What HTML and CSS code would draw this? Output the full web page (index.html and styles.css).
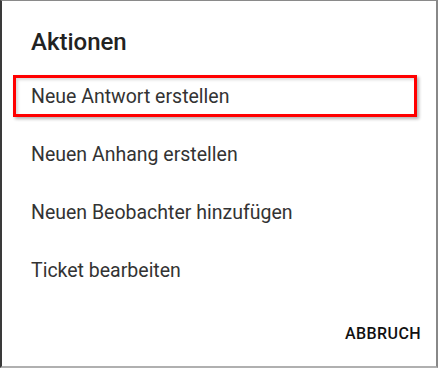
FILE: index.html
```html
<!DOCTYPE html>
<html lang="de">
<head>
  <meta charset="UTF-8" />
  <meta name="viewport" content="width=device-width, initial-scale=1.0"/>
  <title>Aktionen</title>
  <link rel="stylesheet" href="styles.css">
</head>
<body>
  <div class="dialog">
    <h2 class="title">Aktionen</h2>

    <ul class="action-list">
      <li class="action active">Neue Antwort erstellen</li>
      <li class="action">Neuen Anhang erstellen</li>
      <li class="action">Neuen Beobachter hinzufügen</li>
      <li class="action">Ticket bearbeiten</li>
    </ul>

    <div class="buttons">
      <button type="button" class="cancel">Abbruch</button>
    </div>
  </div>
</body>
</html>
```

FILE: styles.css
```css
* {
  margin: 0;
  padding: 0;
  box-sizing: border-box;
}

body, html {
  height: 100%;
  font-family: Roboto, 'Noto Sans', sans-serif;
  background-color: #fff;
}

.dialog {
  height: 368px;
  border-top: 1px solid #8a8a8a;
  border-left: 2px solid #3a3a3a;
  border-right: 2px solid #888;
  border-bottom: 2px solid #b0b0b0;
  background-color: #fff;
}

.title {
  padding: 25px 0 0 29px;
  font-size: 24px;
  line-height: 32px;
  font-weight: 500;
  color: #222;
}

.action-list {
  display: flex;
  flex-direction: column;
  list-style: none;
  margin-top: 9px;
}

.action {
  display: flex;
  align-items: center;
  height: 42px;
  margin: 8px 19px 8px 11px;
  padding-left: 15px;
  border: 3px solid transparent;
  font-size: 19.5px;
  color: #333;
}

.action.active {
  border-color: #f00;
  box-shadow: 2px 2px 3px rgba(0, 0, 0, 0.3), inset 2px 2px 3px rgba(0, 0, 0, 0.15);
}

.buttons {
  display: flex;
  justify-content: flex-end;
  margin-top: 16px;
  padding-right: 15px;
}

.cancel {
  height: 36px;
  background: none;
  border: none;
  font-family: inherit;
  font-size: 16px;
  font-weight: 500;
  letter-spacing: 0.4px;
  text-transform: uppercase;
  color: #111;
  cursor: pointer;
}
```
